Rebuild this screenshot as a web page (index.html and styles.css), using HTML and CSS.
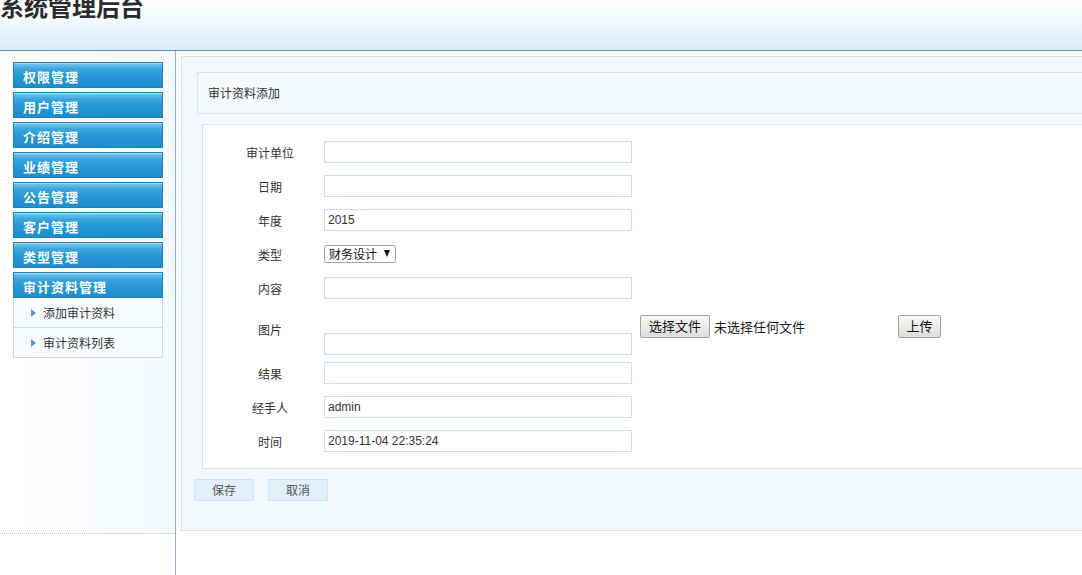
FILE: index.html
```html
<!DOCTYPE html>
<html lang="zh-CN">
<head>
<meta charset="utf-8">
<title>系统管理后台</title>
<link rel="stylesheet" href="styles.css">
</head>
<body>
<header class="top">
  <h1 class="logo">系统管理后台</h1>
</header>
<div class="layout">
  <aside class="side">
    <div class="side-inner">
      <ul class="menu">
        <li class="menu-item">权限管理</li>
        <li class="menu-item">用户管理</li>
        <li class="menu-item">介绍管理</li>
        <li class="menu-item">业绩管理</li>
        <li class="menu-item">公告管理</li>
        <li class="menu-item">客户管理</li>
        <li class="menu-item">类型管理</li>
        <li class="menu-item menu-item-open">审计资料管理</li>
      </ul>
      <ul class="submenu">
        <li class="sub-item"><span class="tri"></span>添加审计资料</li>
        <li class="sub-item"><span class="tri"></span>审计资料列表</li>
      </ul>
    </div>
  </aside>
  <main class="main">
    <section class="panel">
      <div class="panel-title">审计资料添加</div>
      <div class="form-box">
        <div class="row">
          <label class="lbl">审计单位</label>
          <div class="field"><input class="txt" type="text" value=""></div>
        </div>
        <div class="row">
          <label class="lbl">日期</label>
          <div class="field"><input class="txt" type="text" value=""></div>
        </div>
        <div class="row">
          <label class="lbl">年度</label>
          <div class="field"><input class="txt" type="text" value="2015"></div>
        </div>
        <div class="row">
          <label class="lbl">类型</label>
          <div class="field">
            <div class="sel"><span class="sel-text">财务设计</span><span class="sel-arrow"></span></div>
          </div>
        </div>
        <div class="row">
          <label class="lbl">内容</label>
          <div class="field"><input class="txt" type="text" value=""></div>
        </div>
        <div class="row row-pic">
          <label class="lbl">图片</label>
          <div class="field field-pic">
            <input class="txt txt-pic" type="text" value="">
            <div class="file-group">
              <span class="btn-sys">选择文件</span>
              <span class="file-none">未选择任何文件</span>
              <span class="btn-sys btn-up">上传</span>
            </div>
          </div>
        </div>
        <div class="row">
          <label class="lbl">结果</label>
          <div class="field"><input class="txt" type="text" value=""></div>
        </div>
        <div class="row">
          <label class="lbl">经手人</label>
          <div class="field"><input class="txt" type="text" value="admin"></div>
        </div>
        <div class="row">
          <label class="lbl">时间</label>
          <div class="field"><input class="txt" type="text" value="2019-11-04 22:35:24"></div>
        </div>
      </div>
      <div class="actions">
        <button class="btn" type="button">保存</button>
        <button class="btn" type="button">取消</button>
      </div>
    </section>
  </main>
</div>
</body>
</html>
```
FILE: styles.css
```css
* { box-sizing: border-box; }
html, body { margin: 0; padding: 0; }
body {
  font-family: "Liberation Sans", "Noto Sans CJK SC", sans-serif;
  font-size: 12px;
  color: #333;
  background: #fff;
  overflow: hidden;
  height: 575px;
}
ul { list-style: none; margin: 0; padding: 0; }

.top {
  height: 51px;
  border-bottom: 1px solid #5a93b8;
  background: linear-gradient(to bottom, #ffffff 0%, #f3f9fd 40%, #d9ecf9 100%);
  overflow: hidden;
}
.logo {
  margin: -9px 0 0 0;
  padding: 0;
  font-size: 24px;
  line-height: 30px;
  font-weight: bold;
  color: #2b2b2b;
  font-family: "Noto Sans CJK SC", sans-serif;
}

.layout {
  display: flex;
  height: 524px;
}
.side {
  width: 176px;
  flex: none;
  border-right: 1px solid #8fb4cc;
}
.side-inner {
  height: 483px;
  border-bottom: 1px dotted #bfbfbf;
  background: linear-gradient(to right, #ffffff 0%, #fcfdff 35%, #f3f9fd 100%);
  padding: 11px 0 0 13px;
}
.menu-item {
  width: 150px;
  height: 26px;
  margin-bottom: 4px;
  border: 1px solid #1c81bd;
  background: linear-gradient(to bottom, #7ccaf0 0%, #3aa6de 25%, #2598d5 55%, #1f8dcb 100%);
  color: #fff;
  font-family: "Noto Sans CJK SC", sans-serif;
  font-weight: bold;
  font-size: 13px;
  letter-spacing: 1px;
  line-height: 28px;
  padding-left: 9px;
  box-shadow: inset 0 1px 0 rgba(255,255,255,0.35);
}
.menu-item-open { margin-bottom: 0; }
.submenu {
  width: 150px;
  border: 1px solid #c8dae8;
  border-top: none;
  background: #f8fbfe;
}
.sub-item {
  height: 30px;
  line-height: 29px;
  border-bottom: 1px solid #cddde9;
  padding-left: 17px;
  font-family: "Noto Sans CJK SC", sans-serif;
  font-size: 12px;
  color: #333;
  display: flex;
  align-items: center;
}
.sub-item:last-child { border-bottom: none; height: 29px; }
.tri {
  width: 0;
  height: 0;
  border-top: 4px solid transparent;
  border-bottom: 4px solid transparent;
  border-left: 5px solid #4aa0d6;
  margin-right: 7px;
}

.main {
  flex: 1;
  min-width: 0;
  overflow: hidden;
  padding: 5px 0 0 5px;
}
.panel {
  width: 1000px;
  height: 475px;
  border: 1px solid #d3e4f1;
  background: #f2f8fd;
  padding-top: 15px;
}
.panel-title {
  margin-left: 15px;
  height: 42px;
  border: 1px solid #d5e4f0;
  background: #f4f9fd;
  line-height: 40px;
  padding-left: 10px;
  font-family: "Noto Sans CJK SC", sans-serif;
  font-size: 12px;
  color: #333;
}
.form-box {
  margin: 10px 0 0 20px;
  height: 345px;
  border: 1px solid #cfe0ee;
  background: #fff;
  padding: 10px 0 0 19px;
}
.row {
  display: flex;
  align-items: center;
  height: 34px;
}
.row-pic {
  height: 51px;
  align-items: flex-start;
}
.lbl {
  width: 96px;
  text-align: center;
  font-family: "Noto Sans CJK SC", sans-serif;
  font-size: 12px;
  color: #333;
  margin-right: 6px;
}
.row-pic .lbl {
  align-self: center;
  margin-top: -3px;
}
.field { display: flex; align-items: center; }
.field-pic { align-items: flex-start; }
.txt {
  width: 308px;
  height: 22px;
  border: 1px solid #cadff0;
  padding: 0 3px;
  margin: 0;
  font-family: "Liberation Sans", "Noto Sans CJK SC", sans-serif;
  font-size: 12px;
  color: #333;
  background: #fff;
  outline: none;
}
.txt-pic { margin-top: 28px; }
.file-group {
  display: flex;
  align-items: center;
  margin: 10px 0 0 8px;
}
.btn-sys {
  display: inline-block;
  height: 23px;
  line-height: 20px;
  padding: 0 6px;
  border: 1px solid #a3a3a3;
  border-radius: 2px;
  background: linear-gradient(to bottom, #f7f7f7 0%, #e9e9e9 60%, #dcdcdc 100%);
  font-family: "Noto Sans CJK SC", sans-serif;
  font-size: 13px;
  color: #111;
  width: 70px;
  text-align: center;
}
.btn-up { width: 43px; padding: 0; }
.file-none {
  width: 188px;
  padding-left: 4px;
  font-family: "Noto Sans CJK SC", sans-serif;
  font-size: 13px;
  color: #1a1a1a;
}
.sel {
  width: 72px;
  height: 18px;
  border: 1px solid #a6a6a6;
  border-radius: 2px;
  background: #fff;
  display: flex;
  align-items: center;
  padding-left: 4px;
}
.sel-text {
  font-family: "Noto Sans CJK SC", sans-serif;
  font-size: 12px;
  color: #111;
  line-height: 16px;
}
.sel-arrow {
  width: 0;
  height: 0;
  margin-left: 7px;
  margin-top: -2px;
  border-left: 3.5px solid transparent;
  border-right: 3.5px solid transparent;
  border-top: 7px solid #111;
}
.actions {
  display: flex;
  gap: 14px;
  margin: 10px 0 0 12px;
}
.btn {
  width: 60px;
  height: 22px;
  border: 1px solid #cfe3f4;
  background: #e1effb;
  font-family: "Noto Sans CJK SC", sans-serif;
  font-size: 12px;
  color: #555;
  padding: 0;
  margin: 0;
  line-height: 20px;
  cursor: pointer;
}
```
